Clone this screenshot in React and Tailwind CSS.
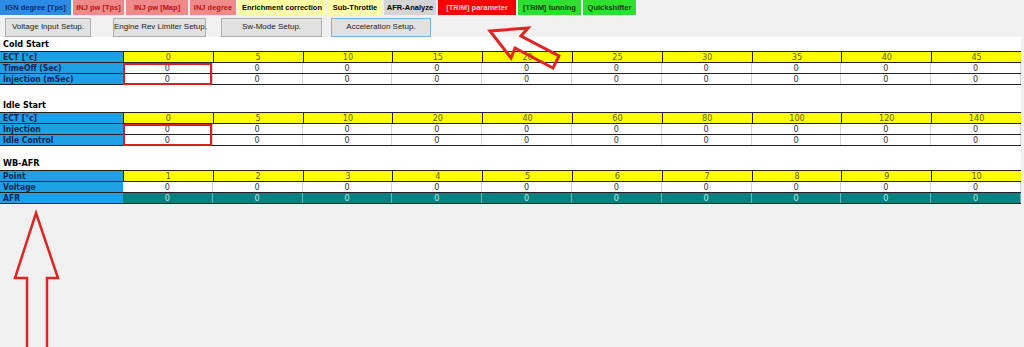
import React from 'react';

const tabs = [
  { label: 'IGN degree [Tps]', cls: 'bg-[#2b8be6] text-[#0a2a6a] w-[71px]' },
  { label: 'INJ pw [Tps]', cls: 'bg-[#f08a8a] text-[#c01010] w-[51px]' },
  { label: 'INJ pw [Map]', cls: 'bg-[#f08a8a] text-[#c01010] w-[62px]' },
  { label: 'INJ degree', cls: 'bg-[#f08a8a] text-[#c01010] w-[46px]' },
  { label: 'Enrichment correction', cls: 'bg-[#ffffa8] text-black w-[88px]' },
  { label: 'Sub-Throttle', cls: 'bg-[#ffffa8] text-black w-[54px]' },
  { label: 'AFR-Analyze', cls: 'bg-[#d4d4d4] text-black w-[52px]' },
  { label: '[TRIM] parameter', cls: 'bg-[#f60000] text-[#ffd0d0] w-[78px]' },
  { label: '[TRIM] tunning', cls: 'bg-[#2ee02e] text-[#0a3a0a] w-[63px]' },
  { label: 'Quickshifter', cls: 'bg-[#2ee02e] text-[#0a3a0a] w-[53px]' },
];

const buttons = [
  { label: 'Voltage Input Setup.', cls: 'ml-[5px] w-[86px] border-[#adadad]' },
  { label: 'Engine Rev Limiter Setup.', cls: 'ml-[22px] w-[93px] border-[#adadad]' },
  { label: 'Sw-Mode Setup.', cls: 'ml-[15px] w-[101px] border-[#adadad]' },
  { label: 'Acceleration Setup.', cls: 'ml-[9px] w-[100px] border-[#7ab4e6]' },
];

const tables = [
  {
    title: 'Cold Start',
    gap: 'h-0',
    rows: [
      { label: 'ECT [°c]', values: [0, 5, 10, 15, 20, 25, 30, 35, 40, 45], head: true },
      { label: 'TimeOff (Sec)', values: Array(10).fill(0), mark: 'top' },
      { label: 'Injection (mSec)', values: Array(10).fill(0), mark: 'bottom' },
    ],
  },
  {
    title: 'Idle Start',
    gap: 'h-[13px]',
    rows: [
      { label: 'ECT [°c]', values: [0, 5, 10, 20, 40, 60, 80, 100, 120, 140], head: true },
      { label: 'Injection', values: Array(10).fill(0), mark: 'top' },
      { label: 'Idle Control', values: Array(10).fill(0), mark: 'bottom' },
    ],
  },
  {
    title: 'WB-AFR',
    gap: 'h-[10px]',
    rows: [
      { label: 'Point', values: [1, 2, 3, 4, 5, 6, 7, 8, 9, 10], head: true },
      { label: 'Voltage', values: Array(10).fill(0) },
      { label: 'AFR', values: Array(10).fill(0), teal: true },
    ],
  },
];

const Row = ({ row }) => (
  <div className="flex h-[11px] border-b border-[#222]">
    <div className="w-[123px] shrink-0 bg-[#1ea0e6] pl-[3px] text-[8.5px] font-bold leading-[10px] text-[#0b2550] font-stretch-condensed">
      {row.label}
    </div>
    <div className="grid flex-1 grid-cols-10">
      {row.values.map((v, i) => {
        let cls = 'bg-white text-[#333] border-r border-[#d4d4d4]';
        if (row.head) cls = 'bg-[#ffff00] text-[#5c5c00] border-l border-[#222]';
        if (row.teal) cls = 'bg-[#0b8080] text-[#bde8e8] border-r border-[#6cb8b8]';
        return (
          <div key={i} className={`relative text-center text-[9px] leading-[10px] font-stretch-condensed ${cls}`}>
            {v}
            {row.mark && i === 0 && (
              <div
                className={`absolute inset-x-0 border-x-2 border-[#d82020] ${
                  row.mark === 'top' ? 'top-0 -bottom-px border-t-2' : '-top-px -bottom-px border-b-2'
                }`}
              />
            )}
          </div>
        );
      })}
    </div>
  </div>
);

const Table = ({ table }) => (
  <div>
    <div className={table.gap} />
    <div className="h-[14px] pl-[3px] pt-[2px] text-[9px] font-bold leading-[11px] text-black font-stretch-condensed">
      {table.title}
    </div>
    <div className="border-t border-[#222]">
      {table.rows.map((row, i) => (
        <Row key={i} row={row} />
      ))}
    </div>
  </div>
);

export default function App() {
  return (
    <div
      className="relative h-[347px] w-[1024px] overflow-hidden bg-[#f0f0f0]"
      style={{ fontFamily: '"DejaVu Sans", "Liberation Sans", sans-serif' }}
    >
      {/* tab strip */}
      <div className="flex h-[15px] gap-[2px]">
        {tabs.map((t) => (
          <div
            key={t.label}
            className={`flex items-center justify-center overflow-hidden whitespace-nowrap text-[7.5px] font-bold leading-none ${t.cls}`}
            style={{ fontFamily: '"Liberation Sans", sans-serif' }}
          >
            {t.label}
          </div>
        ))}
      </div>

      {/* setup buttons */}
      <div className="flex h-[22px] items-center pt-[2px]">
        {buttons.map((b) => (
          <button
            key={b.label}
            className={`h-[19px] whitespace-nowrap border bg-[#e1e1e1] text-[8px] text-[#222] ${b.cls}`}
            style={{ fontFamily: '"Liberation Sans", sans-serif' }}
          >
            {b.label}
          </button>
        ))}
      </div>

      {/* parameter panel */}
      <div className="w-[1021px] bg-white">
        {tables.map((t) => (
          <Table key={t.title} table={t} />
        ))}
      </div>

      {/* annotation arrows */}
      <svg className="pointer-events-none absolute left-0 top-0" width="1024" height="347">
        <path
          d="M490 31 L528 28 L521 36 L559 56 L553 68 L515 48 L511 58 Z"
          fill="none"
          stroke="#e02424"
          strokeWidth="3"
        />
        <path
          d="M36 213 L58 278 L47 278 L47 350 L27 350 L27 278 L15 278 Z"
          fill="none"
          stroke="#e02424"
          strokeWidth="2.5"
        />
      </svg>
    </div>
  );
}
